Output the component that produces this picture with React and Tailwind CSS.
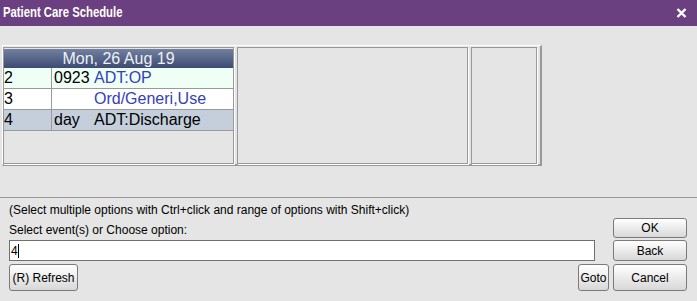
const rows = [
  { n: '2', t: '0923', e: 'ADT:OP', bg: 'bg-[#effff5]', blue: true },
  { n: '3', t: '', e: 'Ord/Generi,Use', bg: 'bg-white', blue: true },
  { n: '4', t: 'day', e: 'ADT:Discharge', bg: 'bg-[#c5cedb]', blue: false },
]

const Btn = ({ children, className = '' }) => (
  <button
    className={`rounded-[3px] border border-[#7a7a7a] bg-gradient-to-b from-white to-[#d8d8d8] text-[12px] leading-none text-black ${className}`}
  >
    {children}
  </button>
)

const App = () => {
  return (
    <div className="w-[697px] h-[301px] overflow-hidden bg-[#e5e5e5] font-['Liberation_Sans',Arial,sans-serif]">
      {/* Title bar */}
      <div className="h-[26px] bg-[#6a4080] flex items-center justify-between pl-[3px] pr-[10px]">
        <span className="inline-block origin-left scale-x-[0.78] text-white font-bold text-[14.5px] whitespace-nowrap">
          Patient Care Schedule
        </span>
        <svg width="11" height="10" viewBox="0 0 11 10">
          <path d="M1.5 1 L9.5 9 M9.5 1 L1.5 9" stroke="white" strokeWidth="2.4" />
        </svg>
      </div>

      {/* Schedule grid */}
      <div className="ml-[2px] mt-[19px] w-[540px] h-[121px] flex gap-[3px] pt-[1px] pr-[1px] border-t border-l border-t-white border-l-white border-r-2 border-b-2 border-r-[#999] border-b-[#999]">
        <div className="w-[231px] h-full border border-[#999] shadow-[1px_1px_0_#fff] flex flex-col">
          <div className="h-[19px] mt-[1px] bg-gradient-to-b from-[#72819f] to-[#3d4b72] text-[#eef1f7] text-[16px] leading-[19px] text-center">
            Mon, 26 Aug 19
          </div>
          {rows.map(r => (
            <div key={r.n} className={`h-[21px] flex border-b border-[#9a9a9a] text-[16px] leading-[20px] ${r.bg}`}>
              <div className="w-[48px] border-r border-[#9a9a9a]">{r.n}</div>
              <div className="flex pl-[2px]">
                <span className="w-[40px]">{r.t}</span>
                <span className={r.blue ? 'text-[#3341b8]' : 'text-black'}>{r.e}</span>
              </div>
            </div>
          ))}
        </div>
        <div className="w-[231px] h-full border border-[#999] shadow-[1px_1px_0_#fff]" />
        <div className="w-[66px] h-full border border-[#999] shadow-[1px_1px_0_#fff]" />
      </div>

      {/* Separator */}
      <div className="mt-[31px] border-t border-[#9a9a9a]" />

      {/* Bottom panel */}
      <div className="flex pl-[9px] pr-[10px] gap-[4px] text-[12px] text-black">
        <div className="flex-1 flex flex-col">
          <div className="mt-[4px] h-[16px] leading-[16px]">
            (Select multiple options with Ctrl+click and range of options with Shift+click)
          </div>
          <div className="mt-[4px] h-[16px] leading-[16px]">Select event(s) or Choose option:</div>
          <div className="mt-[2px] mr-[14px] h-[21px] bg-white border border-[#6f6f6f] flex items-center pl-[1px] text-[12px]">
            4<span className="w-[1px] h-[14px] bg-black" />
          </div>
          <div className="mt-[3px] h-[27px] flex justify-between">
            <Btn className="w-[69px] h-[27px]">(R) Refresh</Btn>
            <Btn className="w-[31px] h-[27px]">Goto</Btn>
          </div>
        </div>
        <div className="w-[74px] flex flex-col">
          <Btn className="mt-[20px] h-[20px]">OK</Btn>
          <Btn className="mt-[2px] h-[21px]">Back</Btn>
          <Btn className="mt-[3px] h-[27px]">Cancel</Btn>
        </div>
      </div>
    </div>
  )
}

export default App
